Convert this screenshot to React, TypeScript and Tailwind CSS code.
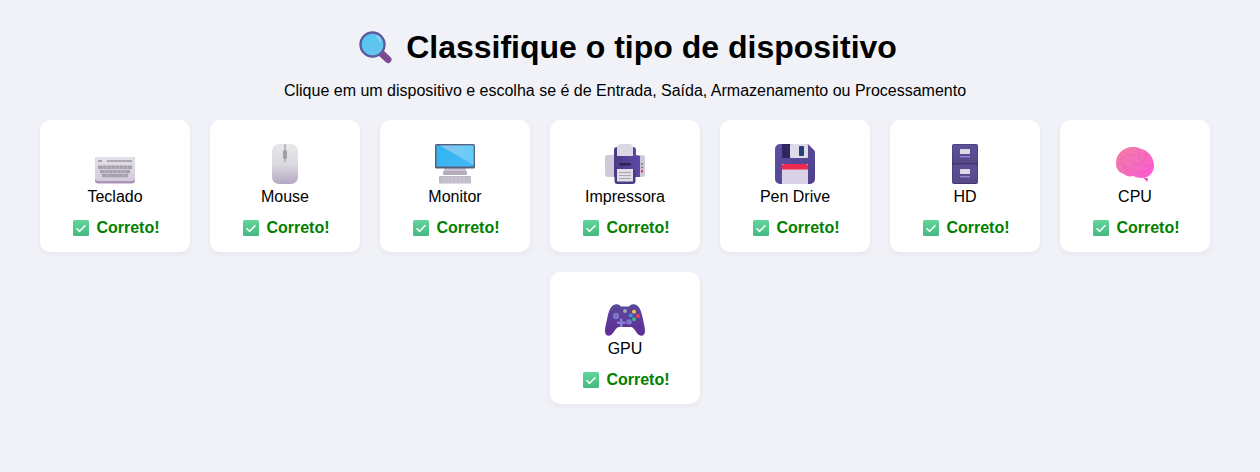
const font = "[font-family:'Liberation_Sans',Arial,sans-serif]";

function Keyboard() {
  return (
    <svg viewBox="0 0 40 40" className="h-10 w-10">
      <defs>
        <linearGradient id="kb" x1="0" y1="0" x2="0" y2="1">
          <stop offset="0" stopColor="#e3e0e7" />
          <stop offset="1" stopColor="#d3ccdb" />
        </linearGradient>
      </defs>
      <rect x="0" y="13" width="40" height="26.5" rx="3" fill="#a797b5" />
      <rect x="0" y="13" width="40" height="24" rx="3" fill="url(#kb)" />
      <rect x="3" y="16" width="4" height="2" fill="#a9a4ae" />
      <rect x="12" y="16" width="25" height="2" fill="#a9a4ae" />
      <rect x="3" y="21.500" width="34" height="3.600" fill="#a5a0ab" />
      <rect x="5" y="26" width="30" height="3.300" fill="#a5a0ab" />
      <rect x="7" y="30" width="26" height="3.300" fill="#a5a0ab" />
      <path d="M15 16v2M19 16v2M23 16v2M27 16v2M31 16v2M8 21.500v3.600M12 21.500v3.600M16 21.500v3.600M20 21.500v3.600M24 21.500v3.600M28 21.500v3.600M32 21.500v3.600M10 26v3.300M14 26v3.300M18 26v3.300M22 26v3.300M26 26v3.300M30 26v3.300M12 30v3.300M28 30v3.300" stroke="#cfcad5" strokeWidth=".6" />
    </svg>
  );
}

function Mouse() {
  return (
    <svg viewBox="0 0 40 40" className="h-10 w-10">
      <defs>
        <linearGradient id="ms" x1="0" y1="0" x2="0" y2="1">
          <stop offset="0" stopColor="#e8e7ea" />
          <stop offset=".5" stopColor="#dcdadf" />
          <stop offset="1" stopColor="#b3a8c2" />
        </linearGradient>
      </defs>
      <rect x="7" y="0" width="26" height="40" rx="7" fill="url(#ms)" />
      <rect x="19.400" y="0" width="1.200" height="18" fill="#a19ea6" />
      <rect x="18" y="6" width="4" height="9" rx="1.500" fill="#a3a0a8" />
    </svg>
  );
}

function Monitor() {
  return (
    <svg viewBox="0 0 40 40" className="h-10 w-10">
      <defs>
        <linearGradient id="scr" x1="0" y1="0" x2="1" y2="1">
          <stop offset="0" stopColor="#2fb4f2" />
          <stop offset="1" stopColor="#45b8f5" />
        </linearGradient>
        <linearGradient id="scr2" x1="0" y1="0" x2="1" y2="0">
          <stop offset="0" stopColor="#8fc4ee" />
          <stop offset="1" stopColor="#62cdf6" />
        </linearGradient>
      </defs>
      <rect x="9" y="24" width="22" height="4" fill="#c9c3d2" />
      <rect x="8" y="27" width="24" height="4" rx="1" fill="#b5acc0" />
      <rect x="0" y="0" width="40" height="24.500" rx="1.500" fill="#55607a" />
      <rect x="1.500" y="1.500" width="37" height="21" fill="url(#scr)" />
      <path d="M5 1.500h33.500V21z" fill="url(#scr2)" />
      <rect x="4" y="32" width="32" height="7.500" rx="1" fill="#bdb6c6" />
      <path d="M5 34h30M5 36h30M5 38h30M9 32v7M13 32v7M17 32v7M21 32v7M25 32v7M29 32v7" stroke="#d3cfd9" strokeWidth=".5" />
    </svg>
  );
}

function Printer() {
  return (
    <svg viewBox="0 0 40 40" className="h-10 w-10">
      <defs>
        <linearGradient id="pr" x1="0" y1="0" x2="1" y2="0">
          <stop offset="0" stopColor="#4b3a84" />
          <stop offset="1" stopColor="#5b4aa6" />
        </linearGradient>
      </defs>
      <rect x="0" y="11" width="40" height="22" rx="3" fill="#cfc9da" />
      <path d="M9 6a3 3 0 0 1 3-3h16a3 3 0 0 1 3 3v5l4 1v21H9z" fill="url(#pr)" />
      <path d="M12 4a4 4 0 0 1 4-4h8a4 4 0 0 1 4 4v8H12z" fill="#dcd7e4" />
      <rect x="14" y="19" width="12" height="2.400" rx="1.200" fill="#2c2450" />
      <rect x="36" y="19" width="2" height="2" rx="1" fill="#77718a" />
      <rect x="36" y="22.500" width="2" height="2" rx="1" fill="#77718a" />
      <rect x="36" y="26" width="2" height="2.400" fill="#f0304f" />
      <rect x="9.500" y="25" width="21" height="15" rx="3" fill="#4a3c80" />
      <rect x="12" y="25" width="16" height="12.500" fill="#e3dfe9" />
      <path d="M14 28.500h12M14 31.500h12M14 34.500h12" stroke="#aaa4b7" strokeWidth="1" />
    </svg>
  );
}

function Floppy() {
  return (
    <svg viewBox="0 0 40 40" className="h-10 w-10">
      <defs>
        <linearGradient id="fl" x1="0" y1="0" x2="1" y2="1">
          <stop offset="0" stopColor="#5f4fa6" />
          <stop offset="1" stopColor="#4f3f8c" />
        </linearGradient>
      </defs>
      <path d="M5 0h27a3 3 0 0 1 2 1l5 5a3 3 0 0 1 1 2v27a5 5 0 0 1-5 5H5a5 5 0 0 1-5-5V5a5 5 0 0 1 5-5z" fill="url(#fl)" />
      <rect x="7" y="0" width="26" height="14" rx="1" fill="#2f2660" />
      <rect x="15" y="0" width="18" height="14" rx="1" fill="#dfdbe6" />
      <rect x="24" y="2" width="5" height="10" rx=".8" fill="#2b3f77" />
      <rect x="7" y="20" width="26" height="20" fill="#dad3e7" />
      <path d="M9 20h22a2 2 0 0 1 2 2v3.500H7V22a2 2 0 0 1 2-2z" fill="#ee2a4f" />
    </svg>
  );
}

function Cabinet() {
  const drawer = (y: number) => (
    <g key={y}>
      <rect x="7.500" y={y + 0.5} width="25" height="18.500" rx="1.500" fill="url(#cb)" />
      <rect x="15" y={y + 5} width="10" height="5" rx=".7" fill="#dcd8e6" />
      <rect x="15" y={y + 12} width="10" height="1.400" fill="#9a7fdc" />
    </g>
  );
  return (
    <svg viewBox="0 0 40 40" className="h-10 w-10">
      <defs>
        <linearGradient id="cb" x1="0" y1="0" x2="0" y2="1">
          <stop offset="0" stopColor="#5c5099" />
          <stop offset="1" stopColor="#574886" />
        </linearGradient>
      </defs>
      <rect x="7" y="0" width="26" height="40" rx="2" fill="#43366f" />
      {drawer(0)}
      {drawer(20)}
    </svg>
  );
}

function Brain() {
  return (
    <svg viewBox="0 0 40 40" className="h-10 w-10">
      <defs>
        <linearGradient id="br" x1="0" y1="0" x2="1" y2="1">
          <stop offset="0" stopColor="#f37ea0" />
          <stop offset=".55" stopColor="#f56cc0" />
          <stop offset="1" stopColor="#ff55d8" />
        </linearGradient>
      </defs>
      <path d="M28 33l5 1.500-.8 3.500z" fill="#f040b8" />
      <path d="M1 19C1 10 8 3 18 3c3 0 5 .5 7 1.500 7 1 14 8 14 17 0 8-6 12.500-12 12.500-4 0-6-1-9-2-4 1-7 0-9-2-4-1-8-4-8-11z" fill="url(#br)" />
      <path d="M4 19c3-1 5 1 6 4M10 23c0 3 3 4 6 4M12 9c2 3 6 3 8 1M22 4c3 3 3 7 1 9M30 9c2 4 0 8-4 9M17 18c3 3 7 3 10 1M36 20c-2 2-5 3-7 2M24 28c4 1 8 0 10-3M10 13c-2 0-4 1-5 3" fill="none" stroke="#e85aa8" strokeWidth=".7" strokeLinecap="round" />
    </svg>
  );
}

function Gamepad() {
  return (
    <svg viewBox="0 0 40 40" className="h-10 w-10">
      <defs>
        <linearGradient id="gp" x1="0" y1="0" x2="0" y2="1">
          <stop offset="0" stopColor="#5a4a9c" />
          <stop offset="1" stopColor="#5f2d94" />
        </linearGradient>
      </defs>
      <path d="M10 8.500C13 7.500 15 9 16 10.500H24C25 9 27 7.500 30 8.500C34 9.500 36 14 37.500 21C39 28 40 32 40 35C40 39 37 41 34 39C31 37 29 31 26 31H14C11 31 9 37 6 39C3 41 0 39 0 35C0 32 1 28 2.500 21C4 14 6 9.500 10 8.500Z" fill="url(#gp)" />
      <circle cx="11" cy="20" r="3.200" fill="#7f74cc" />
      <circle cx="24" cy="26" r="2.800" fill="#7f74cc" />
      <path d="M15 22.500h2.400V25.500h3v2.400h-3v3H15v-3h-3v-2.400h3z" fill="#8a7fd8" />
      <circle cx="20" cy="15" r="1.900" fill="#a9a4b8" />
      <circle cx="29" cy="15.800" r="2" fill="#f2c53a" />
      <circle cx="25.800" cy="19.500" r="2" fill="#3f8fe8" />
      <circle cx="33" cy="20" r="2" fill="#e8405a" />
      <circle cx="29" cy="23.200" r="2" fill="#2fc27a" />
    </svg>
  );
}

function Magnifier() {
  return (
    <svg viewBox="0 0 34 33" className="h-[33px] w-[34px]">
      <defs>
        <linearGradient id="mg" x1="0" y1="0" x2="1" y2="1">
          <stop offset="0" stopColor="#4ec8ee" />
          <stop offset="1" stopColor="#6bc4f0" />
        </linearGradient>
      </defs>
      <line x1="21" y1="21" x2="29" y2="28.500" stroke="#7d4a92" strokeWidth="7" strokeLinecap="round" />
      <circle cx="13.500" cy="13.500" r="12" fill="url(#mg)" stroke="#62589e" strokeWidth="2.400" />
      <path d="M18 5a10 10 0 0 1 3.500 5" fill="none" stroke="#a8e0f6" strokeWidth="1.200" strokeLinecap="round" />
    </svg>
  );
}

function Check() {
  return (
    <svg viewBox="0 0 16 16" className="h-4 w-4 shrink-0">
      <defs>
        <linearGradient id="ck" x1="0" y1="0" x2="0" y2="1">
          <stop offset="0" stopColor="#63d69a" />
          <stop offset="1" stopColor="#45b883" />
        </linearGradient>
      </defs>
      <rect width="16" height="16" rx="1.500" fill="url(#ck)" />
      <path d="M3.500 8.300l3 3 6-6" fill="none" stroke="#f2fff7" strokeWidth="1.600" />
    </svg>
  );
}

const devices = [
  { name: "Teclado", icon: <Keyboard /> },
  { name: "Mouse", icon: <Mouse /> },
  { name: "Monitor", icon: <Monitor /> },
  { name: "Impressora", icon: <Printer /> },
  { name: "Pen Drive", icon: <Floppy /> },
  { name: "HD", icon: <Cabinet /> },
  { name: "CPU", icon: <Brain /> },
  { name: "GPU", icon: <Gamepad /> },
];

export default function App() {
  return (
    <div className={`min-h-[472px] w-full bg-[#f0f2f7] text-black ${font}`}>
      <div className="w-[1250px] pt-[31px]">
        <h1 className="flex h-[33px] items-center justify-center pl-[6px] text-[32px] leading-[33px] font-bold">
          <Magnifier />
          <span className="ml-[13px]">Classifique o tipo de dispositivo</span>
        </h1>
        <p className="mt-[18px] text-center text-base leading-[18px]">
          Clique em um dispositivo e escolha se é de Entrada, Saída, Armazenamento ou Processamento
        </p>
        <div className="mt-[20px] flex flex-wrap justify-center gap-5">
          {devices.map((d) => (
            <div
              key={d.name}
              className="flex h-[132px] w-[150px] flex-col items-center rounded-[10px] bg-white pt-6 shadow-[0_2px_6px_rgba(0,0,0,0.05)]"
            >
              {d.icon}
              <div className="mt-1 text-base leading-[18px]">{d.name}</div>
              <div className="mt-[13px] flex h-[18px] items-center gap-[7px] pl-[3px] text-base leading-[18px] font-bold text-[#008000]">
                <Check />
                <span>Correto!</span>
              </div>
            </div>
          ))}
        </div>
      </div>
    </div>
  );
}
